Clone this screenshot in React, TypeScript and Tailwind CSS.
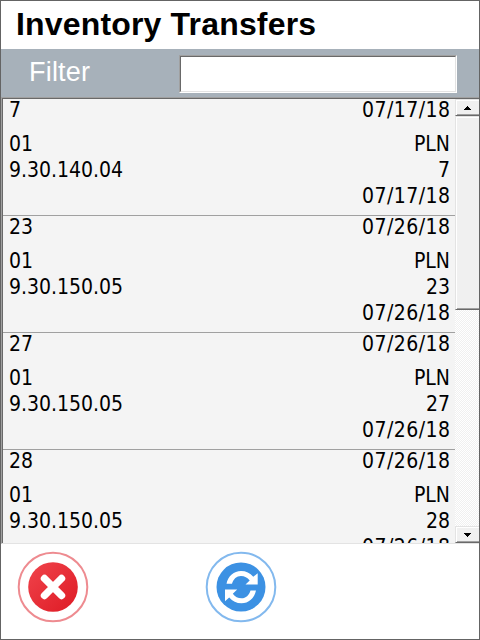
const transfers = [
  { id: '7', code: '9.30.140.04', date: '07/17/18' },
  { id: '23', code: '9.30.150.05', date: '07/26/18' },
  { id: '27', code: '9.30.150.05', date: '07/26/18' },
  { id: '28', code: '9.30.150.05', date: '07/26/18' },
];

function Row({ id, code, date }: { id: string; code: string; date: string }) {
  return (
    <div className="h-[117px] shrink-0 border-b border-[#a0a0a0] pl-[6px] pr-[5px] leading-[26px]">
      <div className="flex h-8 justify-between leading-[22px]"><span>{id}</span><span className="tracking-[0.45px] -mr-[0.45px]">{date}</span></div>
      <div className="flex h-[26px] justify-between"><span>01</span><span>PLN</span></div>
      <div className="flex h-[26px] justify-between"><span>{code}</span><span>{id}</span></div>
      <div className="flex h-[26px] justify-end"><span className="tracking-[0.45px] -mr-[0.45px]">{date}</span></div>
    </div>
  );
}

function Arrow({ down }: { down?: boolean }) {
  return (
    <div className="flex h-[17px] shrink-0 items-center justify-center border-b border-l border-t border-b-[#696969] border-l-[#e3e3e3] border-t-[#e3e3e3] bg-[#f0f0f0] shadow-[inset_1px_1px_0_#fff,inset_0_-1px_0_#a0a0a0]">
      <svg width="7" height="4" viewBox="0 0 7 4" shapeRendering="crispEdges">
        <path d={down ? 'M0 0h7v1H6v1H5v1H4v1H3V3H2V2H1V1H0z' : 'M3 0h1v1h1v1h1v1h1v1H0V3h1V2h1V1h1z'} />
      </svg>
    </div>
  );
}

export default function App() {
  return (
    <div className="flex h-[640px] w-[480px] flex-col overflow-hidden border border-[#646464] bg-white text-black">
      <header className="flex h-12 shrink-0 items-center pb-0.5 pl-[15px] font-['Liberation_Sans',sans-serif] text-[32px] font-bold leading-none tracking-[0.17px]">
        <h1 className="whitespace-nowrap">Inventory Transfers</h1>
      </header>
      <div className="flex h-12 shrink-0 items-start bg-[#a7b1ba] pl-7 pt-[6px]">
        <label className="w-[150px] pt-1 font-['Liberation_Sans',sans-serif] text-[27px] leading-[27px] tracking-[0.2px] text-white">Filter</label>
        <div className="h-[38px] w-[278px] border border-b-white border-l-[#a0a0a0] border-r-white border-t-[#a0a0a0]">
          <input aria-label="Filter" className="block h-full w-full border border-b-[#e3e3e3] border-l-[#696969] border-r-[#e3e3e3] border-t-[#696969] bg-white outline-none" />
        </div>
      </div>
      <div className="flex h-[447px] shrink-0 border-b border-l border-t border-b-[#e3e3e3] border-l-[#a0a0a0] border-t-[#a0a0a0]">
        <div className="flex min-w-0 flex-1 border-l border-t border-[#696969]">
          <div className="flex min-w-0 flex-1 flex-col overflow-hidden bg-[#f4f4f4] font-['DejaVu_Sans_Condensed','DejaVu_Sans',sans-serif] text-[21px]">
            {transfers.map((t) => <Row key={t.id} {...t} />)}
          </div>
          <div className="flex w-6 shrink-0 flex-col bg-[#f8f8f8] bg-[conic-gradient(#f0f0f0_25%,#fff_0_50%,#f0f0f0_0_75%,#fff_0)] bg-[length:2px_2px]">
            <Arrow />
            <div className="h-[194px] shrink-0 border-b border-l border-t border-b-[#696969] border-l-[#e3e3e3] border-t-[#e3e3e3] bg-[#f0f0f0] shadow-[inset_1px_1px_0_#fff,inset_0_-1px_0_#a0a0a0]" />
            <div className="flex-1" />
            <Arrow down />
          </div>
        </div>
      </div>
      <footer className="flex flex-1 items-start gap-[116px] pl-4 pt-[7px]">
        <button aria-label="Cancel">
          <svg width="72" height="72" viewBox="0 0 72 72" className="block">
            <defs><linearGradient id="red" x1="0" y1="0" x2="1" y2="1"><stop stopColor="#f0444c" /><stop offset="1" stopColor="#de1a24" /></linearGradient></defs>
            <circle cx="36" cy="36" r="34.3" fill="#fff" stroke="#ee8b90" strokeWidth="2" />
            <circle cx="36" cy="36" r="24.8" fill="url(#red)" />
            <path d="M27.500 27.500l17 17M44.500 27.500l-17 17" stroke="#fff" strokeWidth="7.400" strokeLinecap="round" />
          </svg>
        </button>
        <button aria-label="Refresh">
          <svg width="72" height="72" viewBox="0 0 72 72" className="block">
            <circle cx="36" cy="36" r="34.3" fill="#fff" stroke="#83b9ee" strokeWidth="2" />
            <circle cx="36" cy="36" r="24.500" fill="#3c91e3" />
            <path d="M21.500 32.700C23 25 29 20 36 20c5 0 9 2 12.300 5.800L52.700 22.200V33.500H40.500L44.700 29.500C42.500 26.500 39.500 25 36 25c-4.500 0-7.500 3-9 7.700z" fill="#fff" />
            <path d="M51 39.500C49.500 47.200 43.500 52.300 36.500 52.300c-5 0-9-2-12.300-5.800L20 50.300V38.500H32.200L27.800 42.800C30 45.800 33 47.300 36.500 47.300c4.500 0 7.500-3 9-7.800z" fill="#fff" />
          </svg>
        </button>
      </footer>
    </div>
  );
}
